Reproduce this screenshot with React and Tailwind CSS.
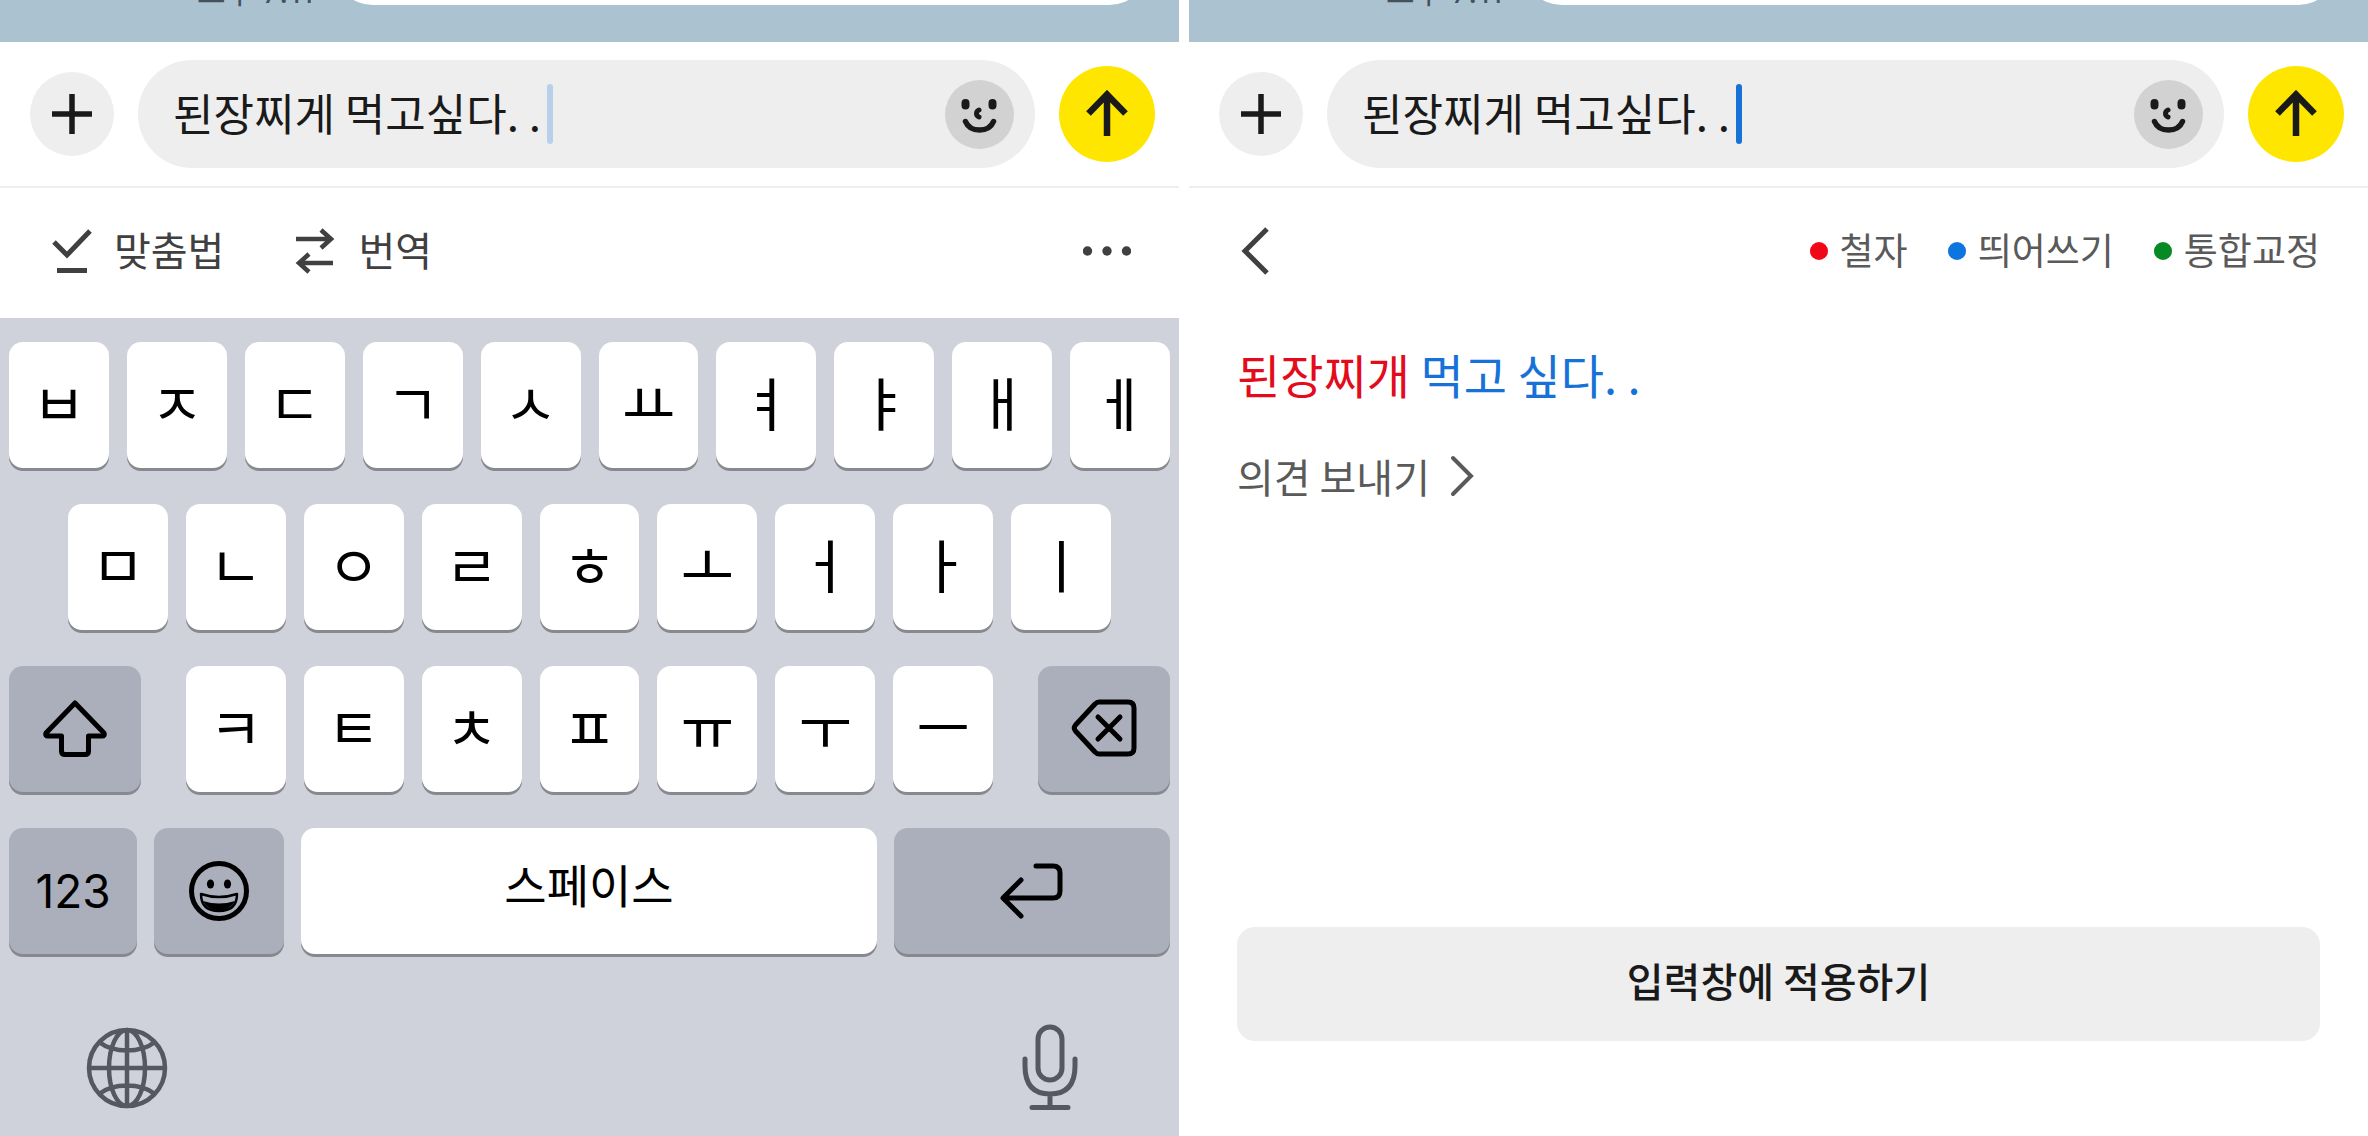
import React, { useState } from 'react';

const ROW_1 = ['ㅂ', 'ㅈ', 'ㄷ', 'ㄱ', 'ㅅ', 'ㅛ', 'ㅕ', 'ㅑ', 'ㅐ', 'ㅔ'];
const ROW_2 = ['ㅁ', 'ㄴ', 'ㅇ', 'ㄹ', 'ㅎ', 'ㅗ', 'ㅓ', 'ㅏ', 'ㅣ'];
const ROW_3 = ['ㅋ', 'ㅌ', 'ㅊ', 'ㅍ', 'ㅠ', 'ㅜ', 'ㅡ'];

const LEGEND = [
  { label: '철자', dot: 'bg-[#f10817]' },
  { label: '띄어쓰기', dot: 'bg-[#0d74e0]' },
  { label: '통합교정', dot: 'bg-[#078a24]' },
];

const Key = ({ children, label, className = 'col-span-2 pb-2', dark = false }) => (
  <button
    type="button"
    aria-label={label}
    className={`flex h-[126px] items-center justify-center rounded-[14px] text-[58px] leading-none text-black shadow-[0_3px_0_#87898e] ${
      dark ? 'bg-[#abafbb]' : 'bg-white'
    } ${className}`}
  >
    {children}
  </button>
);

const ChatTail = () => (
  <div className="flex h-[42px] items-start overflow-hidden bg-[#abc2d0] pr-[30px] pl-[197px]">
    <span className="-mt-[29px] w-[136px] shrink-0 font-[Inter,'Noto_Sans_CJK_KR',sans-serif] text-[31px] leading-[42px] whitespace-nowrap text-[#45525b]">
      오후 7:11
    </span>
    <div className="-mt-[75px] h-[80px] flex-1 rounded-[40px] bg-white" />
  </div>
);

const MessageBar = ({ value, onChange, caret }) => (
  <div className="flex h-[146px] items-center gap-6 border-b-2 border-[#eeeeee] pr-6 pl-[30px]">
    <button
      type="button"
      aria-label="첨부"
      className="flex size-[84px] shrink-0 items-center justify-center rounded-full bg-[#eeeeee]"
    >
      <svg width="40" height="40" viewBox="0 0 40 40" stroke="#1a1a1a" strokeWidth="5.500">
        <path d="M20 0V40M0 20H40" />
      </svg>
    </button>
    <div className="flex h-[108px] flex-1 items-center rounded-full bg-[#eeeeee] pr-[21px] pl-[35px]">
      <input
        type="text"
        aria-label="메시지"
        value={value}
        onChange={(e) => onChange(e.target.value)}
        className="field-sizing-content bg-transparent pb-1 text-[44px] leading-[66px] text-[#1a1a1a] outline-none"
      />
      <span className={`ml-[6px] h-[60px] w-[6px] rounded-sm ${caret}`} />
      <button
        type="button"
        aria-label="이모티콘"
        className="ml-auto flex size-[69px] items-center justify-center rounded-full bg-[#d2d2d2]"
      >
        <svg width="69" height="69" viewBox="0 0 69 69" fill="none" stroke="#1a1a1a" strokeLinecap="round">
          <path d="M20.500 23V25.500M47.500 23V25.500" strokeWidth="8" />
          <path d="M34 30Q31.500 31 31.500 33.500Q31.500 36 34 37" strokeWidth="5" />
          <path d="M20.500 41.500Q24 50 34.500 50Q45 50 48.500 41.500" strokeWidth="5.500" />
        </svg>
      </button>
    </div>
    <button
      type="button"
      aria-label="보내기"
      className="flex size-[96px] shrink-0 items-center justify-center rounded-full bg-[#ffe600]"
    >
      <svg width="44" height="48" viewBox="0 0 44 48" fill="none" stroke="#1a1a1a" strokeWidth="6.500">
        <path d="M22 46V4M3.500 23.500L22 4.500L40.500 23.500" />
      </svg>
    </button>
  </div>
);

const Toolbar = () => (
  <div className="flex h-[130px] items-center px-[48px] pb-1 text-[40px] leading-none text-[#404040]">
    <button type="button" className="flex items-center gap-5">
      <svg width="46" height="46" viewBox="0 0 46 46" fill="none" stroke="currentColor" strokeWidth="5">
        <path d="M6 14L19 27L42 3M9 42.500H39" />
      </svg>
      <span className="pb-1">맞춤법</span>
    </button>
    <button type="button" className="ml-[68px] flex items-center gap-5">
      <svg width="46" height="46" viewBox="0 0 46 46" fill="none" stroke="currentColor" strokeWidth="4.500">
        <path d="M4 11H40M29 2L39 11L29 20M41 35H6M17 26L7 35L17 44" />
      </svg>
      <span className="pb-1">번역</span>
    </button>
    <button type="button" aria-label="더보기" className="ml-auto">
      <svg width="48" height="10" viewBox="0 0 48 10" fill="currentColor">
        <circle cx="4.500" cy="5" r="4.700" />
        <circle cx="24" cy="5" r="4.700" />
        <circle cx="43.500" cy="5" r="4.700" />
      </svg>
    </button>
  </div>
);

const Keyboard = () => (
  <div className="flex flex-1 flex-col gap-9 bg-[#cfd2da] px-[9px] pt-6">
    <div className="grid grid-cols-20 gap-x-[18px]">
      {ROW_1.map((key) => (
        <Key key={key}>{key}</Key>
      ))}
    </div>
    <div className="grid grid-cols-20 gap-x-[18px]">
      {ROW_2.map((key, i) => (
        <Key key={key} className={i === 0 ? 'col-span-2 col-start-2 pb-2' : 'col-span-2 pb-2'}>
          {key}
        </Key>
      ))}
    </div>
    <div className="grid grid-cols-20 gap-x-[18px]">
      <Key label="Shift" dark className="col-span-3 w-5/6">
        <svg width="66" height="58" viewBox="0 0 66 58" fill="none" stroke="currentColor" strokeWidth="5" strokeLinejoin="round">
          <path d="M33 3L62 33Q63 36 60 36H46.500V51Q46.500 54.500 43 54.500H23Q19.500 54.500 19.500 51V36H6Q3 36 4 33Z" />
        </svg>
      </Key>
      {ROW_3.map((key) => (
        <Key key={key}>{key}</Key>
      ))}
      <Key label="지우기" dark className="col-span-3 w-5/6 justify-self-end">
        <svg width="66" height="60" viewBox="0 0 66 60" fill="none" stroke="currentColor" strokeWidth="5" strokeLinecap="round" strokeLinejoin="round">
          <path d="M28 3H57Q63 3 63 9V49Q63 55 57 55H28Q26 55 24 53L4.500 32Q2 29 4.500 26L24 5Q26 3 28 3Z" />
          <path d="M27 18L49 40M49 18L27 40" />
        </svg>
      </Key>
    </div>
    <div className="grid grid-cols-[128fr_130fr_575fr_276fr] gap-x-[17px]">
      <Key dark className="">
        <span className="font-[Inter] text-[46px] font-normal">123</span>
      </Key>
      <Key label="이모지" dark className="">
        <svg width="62" height="62" viewBox="0 0 62 62" fill="none" stroke="currentColor">
          <circle cx="31" cy="31" r="27.500" strokeWidth="5" />
          <ellipse cx="22.500" cy="24" rx="3.600" ry="4.600" fill="currentColor" stroke="none" />
          <ellipse cx="39.500" cy="24" rx="3.600" ry="4.600" fill="currentColor" stroke="none" />
          <path d="M13 34Q31 40 49 34Q49 51 31 51Q13 51 13 34Z" strokeWidth="2.500" strokeLinejoin="round" />
          <path d="M15 41Q31 46 47 41Q43 50 31 50.500Q19 50 15 41Z" fill="currentColor" stroke="none" />
        </svg>
      </Key>
      <Key className="pb-4">
        <span className="text-[46px]">스페이스</span>
      </Key>
      <Key label="줄바꿈" dark className="">
        <svg width="64" height="56" viewBox="0 0 64 56" fill="none" stroke="currentColor" strokeWidth="5" strokeLinecap="round" strokeLinejoin="round">
          <path d="M36 3H53Q60 3 60 10V28Q60 35 53 35H4M21 17L3 35L21 53" />
        </svg>
      </Key>
    </div>
    <div className="flex items-center justify-between px-[77px] pt-[34px] pb-4 text-[#555860]">
      <button type="button" aria-label="언어 변경">
        <svg width="82" height="82" viewBox="0 0 82 82" fill="none" stroke="currentColor" strokeWidth="4.500">
          <circle cx="41" cy="41" r="38" />
          <ellipse cx="41" cy="41" rx="18" ry="38" />
          <path d="M41 3V79M3 41H79M13 15Q24 23.500 41 23.500Q58 23.500 69 15M13 67Q24 58.500 41 58.500Q58 58.500 69 67" />
        </svg>
      </button>
      <button type="button" aria-label="음성 입력" className="mr-[14px]">
        <svg width="58" height="88" viewBox="0 0 58 88" fill="none" stroke="currentColor" strokeWidth="5" strokeLinecap="round">
          <rect x="17" y="3" width="24" height="53" rx="12" />
          <path d="M4 35V42Q4 70 29 70Q54 70 54 42V35M29 70V83M11 83.500H47" />
        </svg>
      </button>
    </div>
  </div>
);

const SpellCheck = () => (
  <div className="flex flex-1 flex-col px-12 pb-[95px]">
    <div className="flex h-[130px] items-center justify-between pb-1">
      <button type="button" aria-label="뒤로" className="pl-1">
        <svg width="30" height="50" viewBox="0 0 30 50" fill="none" stroke="#404040" strokeWidth="5">
          <path d="M26 3L4 25L26 47" />
        </svg>
      </button>
      <ul className="flex items-center gap-10 text-[37px] leading-none text-[#5a5a5a]">
        {LEGEND.map(({ label, dot }) => (
          <li key={label} className="flex items-center gap-3">
            <span className={`size-[18px] rounded-full ${dot}`} />
            <span className="pb-1">{label}</span>
          </li>
        ))}
      </ul>
    </div>
    <p className="mt-[26px] text-[47px] leading-[60px] text-[#1772d8]">
      <span className="text-[#e30b1c]">된장찌개</span> 먹고 싶다. .
    </p>
    <a href="#feedback" className="mt-[42px] flex items-center gap-5 text-[40px] leading-[60px] text-[#5a5a5a]">
      의견 보내기
      <svg width="24" height="42" viewBox="0 0 24 42" fill="none" stroke="currentColor" strokeWidth="4" strokeLinecap="round">
        <path d="M3 3L21 21L3 39" />
      </svg>
    </a>
    <button
      type="button"
      className="mt-auto h-[114px] w-full rounded-[18px] bg-[#eeeeee] pb-2 text-[40px] font-medium text-[#1a1a1a]"
    >
      입력창에 적용하기
    </button>
  </div>
);

const App = () => {
  const [draft, setDraft] = useState('된장찌게 먹고싶다. .');

  return (
    <main className="flex min-h-screen gap-[10px] bg-white font-['Noto_Sans_CJK_KR',sans-serif]">
      <section className="flex min-w-0 flex-1 flex-col">
        <ChatTail />
        <MessageBar value={draft} onChange={setDraft} caret="bg-[#b7d1ea]" />
        <Toolbar />
        <Keyboard />
      </section>
      <section className="flex min-w-0 flex-1 flex-col">
        <ChatTail />
        <MessageBar value={draft} onChange={setDraft} caret="bg-[#1772d8]" />
        <SpellCheck />
      </section>
    </main>
  );
};

export default App;
